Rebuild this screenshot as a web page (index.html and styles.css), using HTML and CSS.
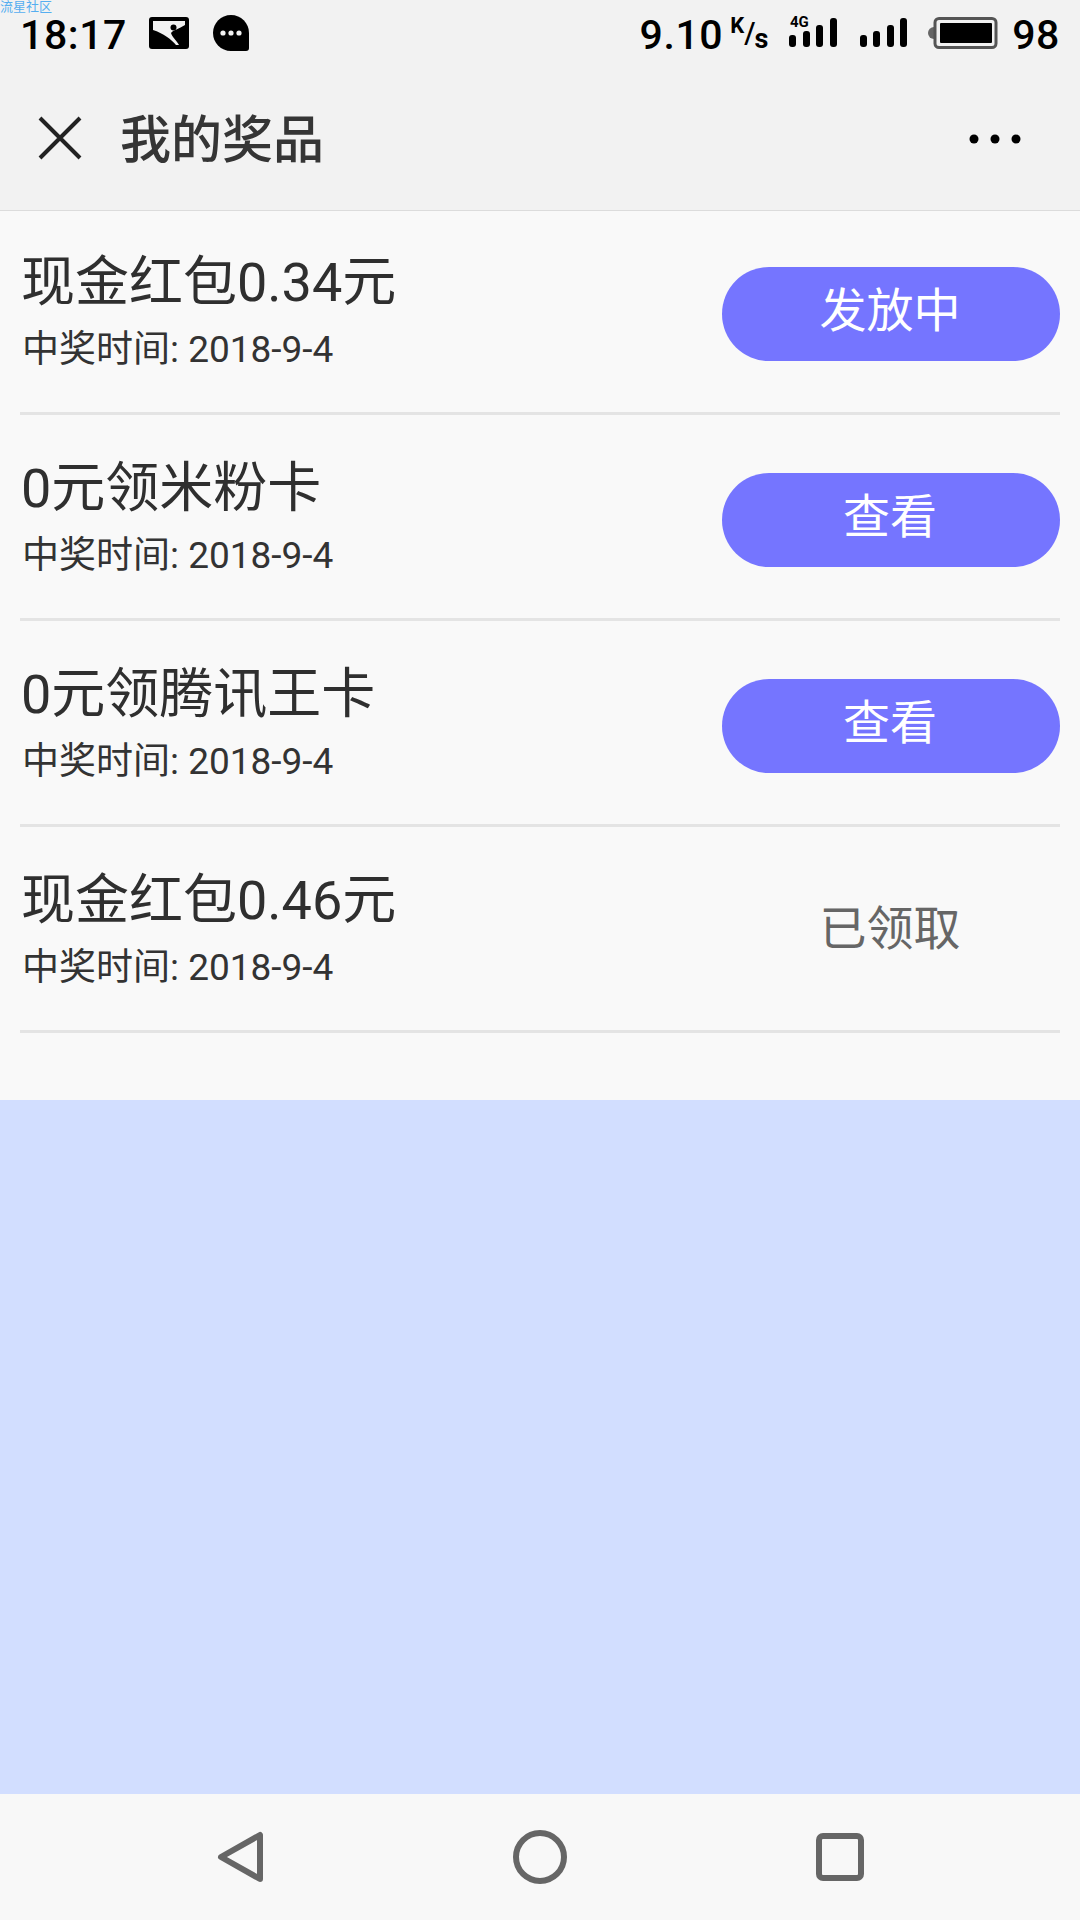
FILE: index.html
```html
<!DOCTYPE html>
<html lang="zh">
<head>
<meta charset="utf-8">
<title>我的奖品</title>
<link rel="stylesheet" href="styles.css">
</head>
<body>
<div class="app">
  <header class="top">
    <span class="watermark">流星社区</span>
    <div class="status">
      <div class="status-left">
        <span class="time">18:17</span>
        <svg class="ico-pic" width="40" height="32" viewBox="0 0 40 32"><rect width="40" height="32" rx="3" fill="#000"/><path d="M4 4 H36 V8 C30 12 24 13 22 16 C23 20 28 24 30 28 H27 C23 23 14 16 4 13 Z" fill="#f2f2f2"/><circle cx="24.5" cy="10.5" r="3" fill="#000"/></svg>
        <svg class="ico-msg" width="36" height="36" viewBox="0 0 36 36"><path d="M18 0 C28 0 36 8 36 18 V33 Q36 36 33 36 H18 C8 36 0 28 0 18 C0 8 8 0 18 0 Z" fill="#000"/><circle cx="10" cy="18" r="2.6" fill="#f2f2f2"/><circle cx="18" cy="18" r="2.6" fill="#f2f2f2"/><circle cx="26" cy="18" r="2.6" fill="#f2f2f2"/></svg>
      </div>
      <div class="status-right">
        <span class="speed">9.10</span>
        <span class="unit"><span class="unit-k">K</span>/<span class="unit-s">s</span></span>
        <svg class="ico-sig" width="50" height="44" viewBox="0 -6 50 44">
          <text x="1" y="10" class="tag-4g">4G</text>
          <rect x="0" y="18" width="7" height="12" rx="3" fill="#000"/><rect x="14" y="14" width="7" height="16" rx="3" fill="#000"/><rect x="27" y="8" width="7" height="22" rx="3" fill="#000"/><rect x="41" y="1" width="7" height="29" rx="3" fill="#000"/>
        </svg>
        <svg class="ico-sig2" width="48" height="32" viewBox="0 0 48 32">
          <rect x="0" y="18" width="7" height="12" rx="3" fill="#000"/><rect x="13" y="14" width="7" height="16" rx="3" fill="#000"/><rect x="27" y="8" width="7" height="22" rx="3" fill="#000"/><rect x="40" y="1" width="7" height="29" rx="3" fill="#000"/>
        </svg>
        <svg class="ico-bat" width="70" height="32" viewBox="0 0 70 32"><path d="M6 10 A6 6 0 0 0 6 22 Z" fill="#666"/><rect x="7" y="1.5" width="61" height="29" rx="4" fill="none" stroke="#555" stroke-width="3"/><rect x="12" y="6" width="52" height="20" rx="1" fill="#000"/></svg>
        <span class="batt">98</span>
      </div>
    </div>
    <div class="bar">
      <div class="bar-left">
        <svg class="ico-close" width="44" height="44" viewBox="0 0 44 44"><path d="M2 2 L42 42 M42 2 L2 42" stroke="#222" stroke-width="4" fill="none"/></svg>
        <h1 class="title">我的奖品</h1>
      </div>
      <svg class="ico-more" width="52" height="10" viewBox="0 0 52 10"><circle cx="5" cy="5" r="4.5" fill="#000"/><circle cx="26" cy="5" r="4.5" fill="#000"/><circle cx="47" cy="5" r="4.5" fill="#000"/></svg>
    </div>
  </header>

  <main class="list">
    <div class="row">
      <div class="info"><div class="name">现金红包0.34元</div><div class="date">中奖时间: 2018-9-4</div></div>
      <div class="btn">发放中</div>
    </div>
    <div class="row">
      <div class="info"><div class="name">0元领米粉卡</div><div class="date">中奖时间: 2018-9-4</div></div>
      <div class="btn">查看</div>
    </div>
    <div class="row">
      <div class="info"><div class="name">0元领腾讯王卡</div><div class="date">中奖时间: 2018-9-4</div></div>
      <div class="btn">查看</div>
    </div>
    <div class="row">
      <div class="info"><div class="name">现金红包0.46元</div><div class="date">中奖时间: 2018-9-4</div></div>
      <div class="btn btn-done">已领取</div>
    </div>
  </main>

  <div class="empty"></div>

  <nav class="nav">
    <svg width="47" height="52" viewBox="0 0 47 52"><path d="M43 4 V48 L4 26 Z" fill="none" stroke="#666" stroke-width="6" stroke-linejoin="round"/></svg>
    <svg width="54" height="54" viewBox="0 0 54 54"><circle cx="27" cy="27" r="24" fill="none" stroke="#666" stroke-width="6"/></svg>
    <svg width="48" height="48" viewBox="0 0 48 48"><rect x="3" y="3" width="42" height="42" rx="4" fill="none" stroke="#666" stroke-width="6"/></svg>
  </nav>
</div>
</body>
</html>
```
FILE: styles.css
```css
* { box-sizing: border-box; }
html, body { margin: 0; padding: 0; }
body { font-family: Roboto, "Noto Sans CJK SC", sans-serif; color: #2f2f2f; }
.app { width: 1080px; height: 1920px; display: flex; flex-direction: column; background: #f9f9f9; overflow: hidden; }

.top { position: relative; height: 210px; background: #f2f2f2; box-shadow: 0 1px 0 #dcdcdc; flex: none; }
.watermark { position: absolute; left: 0; top: 0; font-size: 13px; line-height: 12px; color: #55aef0; font-family: "Noto Sans CJK SC", sans-serif; }
.status { height: 66px; display: flex; justify-content: space-between; align-items: center; padding: 0 20px 0 20px; color: #000; }
.status-left, .status-right { display: flex; align-items: center; }
.time, .speed, .batt { font-size: 41px; font-weight: 500; line-height: 40px; letter-spacing: 0.6px; }
.time { margin-top: 3px; }
.speed, .batt { margin-top: 3px; }
.ico-pic { margin-left: 22px; }
.ico-msg { margin-left: 24px; }
.unit { font-size: 29px; font-weight: 500; line-height: 44px; margin-left: 7px; width: 39px; display: flex; align-items: center; }
.unit-k { font-size: 22px; font-weight: 700; margin-top: -14px; }
.unit-s { font-size: 27px; font-weight: 700; margin-top: 12px; margin-left: -1px; }
.ico-sig { margin-left: 20px; }
.ico-sig2 { margin-left: 21px; }
.ico-bat { margin-left: 20px; }
.batt { margin-left: 14px; }
.tag-4g { font: 700 15px Roboto, sans-serif; fill: #000; }

.bar { height: 144px; display: flex; justify-content: space-between; align-items: center; padding: 0 59px 0 38px; }
.bar-left { display: flex; align-items: center; }
.ico-close { width: 44px; height: 44px; }
.title { margin: 5px 0 0 38px; font-size: 51px; font-weight: 500; line-height: 60px; color: #353535; }
.ico-more { margin-top: 2px; }

.list { height: 890px; padding: 0 20px; flex: none; }
.row { height: 206px; padding-top: 7px; display: flex; justify-content: space-between; align-items: center; border-bottom: 3px solid #e4e4e4; }
.row:first-child { height: 205px; padding-top: 6px; }
.info { padding: 0 0 3px 1px; }
.name { font-size: 54px; line-height: 62px; color: #2f2f2f; }
.date { font-size: 37px; line-height: 46px; margin: 13px 0 0 1px; color: #333; }
.btn { width: 338px; height: 94px; padding-right: 2px; border-radius: 47px; background: #7575ff; color: #fff; font-size: 47px; line-height: 80px; text-align: center; font-family: "Noto Sans CJK SC", sans-serif; }
.btn-done { background: transparent; color: #666; line-height: 80px; }

.empty { flex: 1; background: #d2deff; }
.nav { height: 126px; flex: none; background: #f8f8f8; display: flex; align-items: center; padding: 0 216px 0 217px; justify-content: space-between; }
```
